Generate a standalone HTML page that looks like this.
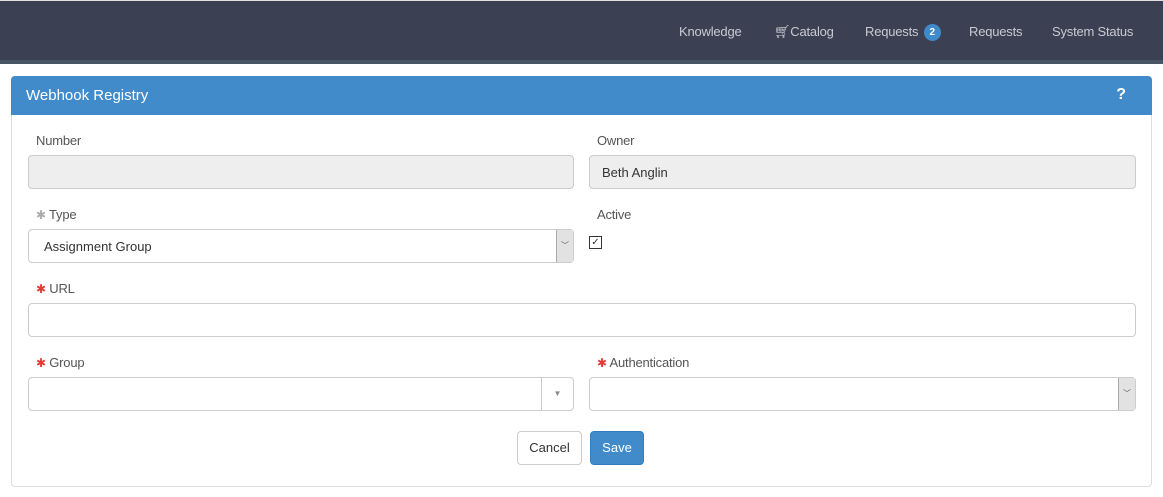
<!DOCTYPE html>
<html><head><style>
*{box-sizing:border-box;margin:0;padding:0}
body{width:1163px;height:497px;background:#fff;font-family:"Liberation Sans",sans-serif;font-size:13px;color:#333;position:relative;overflow:hidden}
.nav{position:absolute;left:0;top:0;width:1163px;height:64px;background:#3b4052;border-top:1px solid #e0e0e0;border-bottom:4px solid #475565}
.nav span{position:absolute;top:23px;color:#c8cbd2;font-size:13px;letter-spacing:-0.2px}
.badge{display:inline-block;width:17px;height:17px;border-radius:50%;background:#3f8acb;color:#fff;font-size:10px;font-weight:bold;text-align:center;line-height:17px;vertical-align:middle;margin-left:2px}
.panel{position:absolute;left:11px;top:76px;width:1141px;height:411px;border:1px solid #ddd;border-radius:4px}
.ph{position:absolute;left:-1px;top:-1px;width:1141px;height:39px;background:#428bca;border-radius:4px 4px 0 0;color:#fff;font-size:15px;padding:11px 15px}
.ph b{position:absolute;right:26px;top:10px;font-size:16px}
.lbl{position:absolute;color:#555;font-size:13px;letter-spacing:-0.2px}
.in{position:absolute;height:34px;border:1px solid #ccc;border-radius:4px;background:#fff}
.ro{background:#eee}
.star{color:#e53935;font-size:12px}
.dd{position:absolute;right:0;top:0;width:17px;height:32px;background:#e2e2e2;border-left:1px solid #aaa;font-size:8px;color:#555;text-align:center;line-height:32px}
.btn{position:absolute;top:431px;height:34px;border-radius:4px;font-size:13px;text-align:center;line-height:32px}
</style></head><body>
<div class="nav">
<span style="left:679px">Knowledge</span>
<span style="left:774px">🛒︎Catalog</span>
<span style="left:865px">Requests <i class="badge" style="font-style:normal">2</i></span>
<span style="left:969px">Requests</span>
<span style="left:1052px">System Status</span>
</div>
<div class="panel"><div class="ph">Webhook Registry<b>?</b></div></div>
<div class="lbl" style="left:36px;top:133px">Number</div>
<div class="in ro" style="left:28px;top:155px;width:546px"></div>
<div class="lbl" style="left:597px;top:133px">Owner</div>
<div class="in ro" style="left:589px;top:155px;width:547px;padding:9px 12px;color:#333">Beth Anglin</div>
<div class="lbl" style="left:36px;top:207px"><span class="star" style="color:#aaa">✱</span> Type</div>
<div class="in" style="left:28px;top:229px;width:546px;padding:9px 15px">Assignment Group<div class="dd">﹀</div></div>
<div class="lbl" style="left:597px;top:207px">Active</div>
<div style="position:absolute;left:589px;top:236px;width:13px;height:13px;border:1px solid #333;font-size:10px;line-height:11px;text-align:center">✓</div>
<div class="lbl" style="left:36px;top:281px"><span class="star">✱</span> URL</div>
<div class="in" style="left:28px;top:303px;width:1108px"></div>
<div class="lbl" style="left:36px;top:355px"><span class="star">✱</span> Group</div>
<div class="in" style="left:28px;top:377px;width:546px"><div style="position:absolute;right:0;top:0;width:32px;height:32px;border-left:1px solid #ccc;color:#888;font-size:8px;text-align:center;line-height:32px">▼</div></div>
<div class="lbl" style="left:597px;top:355px"><span class="star">✱</span> Authentication</div>
<div class="in" style="left:589px;top:377px;width:547px"><div class="dd">﹀</div></div>
<div class="btn" style="left:517px;width:65px;border:1px solid #ccc;color:#333">Cancel</div>
<div class="btn" style="left:590px;width:54px;background:#428bca;border:1px solid #357ebd;color:#fff">Save</div>
</body></html>
